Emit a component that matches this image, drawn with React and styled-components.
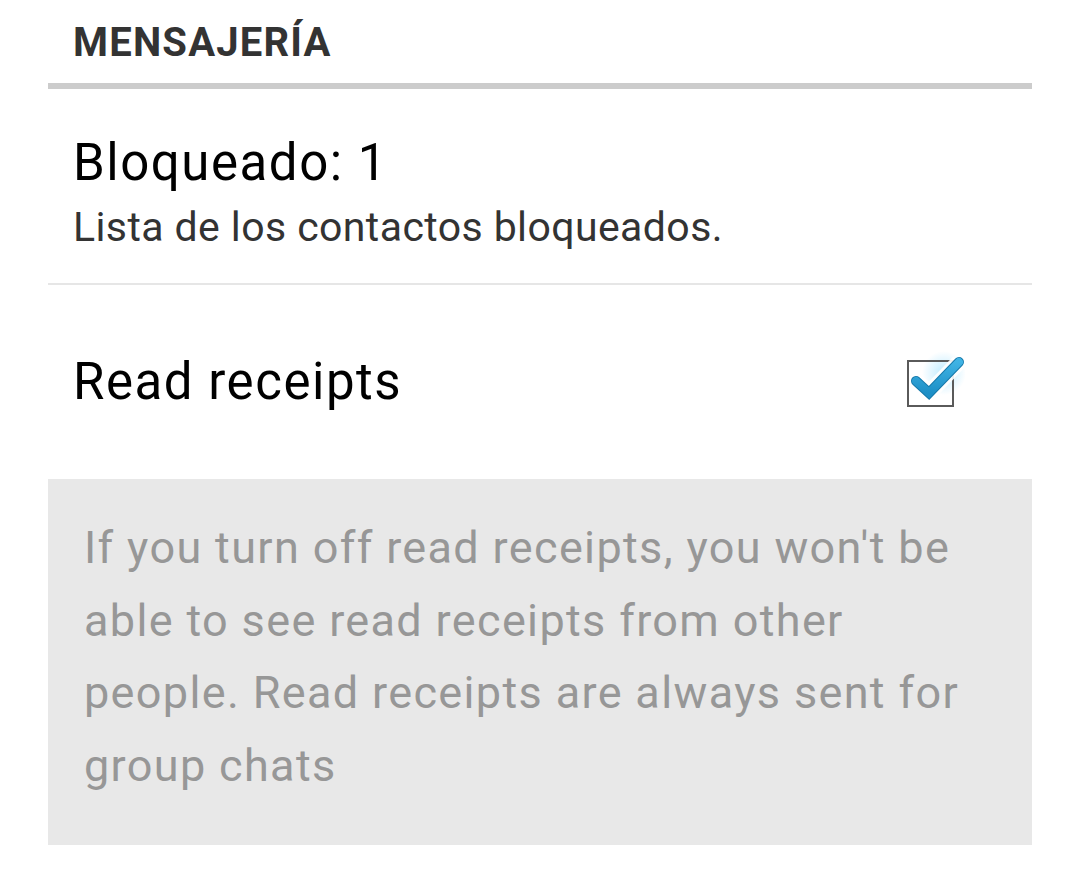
import React from 'react';
import styled, { createGlobalStyle } from 'styled-components';

const GlobalStyle = createGlobalStyle`
  html, body {
    margin: 0;
    padding: 0;
    background: #ffffff;
    font-family: Roboto, "Noto Sans", sans-serif;
  }
`;

const Page = styled.div`
  width: 1080px;
  height: 870px;
  padding: 0 48px;
  box-sizing: border-box;
  background: #fff;
`;

const SectionHeader = styled.div`
  padding: 19px 0 0 25px;
  height: 89px;
  box-sizing: border-box;
  font-size: 40px;
  font-weight: 700;
  letter-spacing: 0.03em;
  color: #333;
  line-height: 48px;
  border-bottom: 6px solid #cccccc;
`;

const Row = styled.div`
  display: flex;
  align-items: ${(p) => (p.top ? 'flex-start' : 'center')};
  justify-content: space-between;
  padding: ${(p) => (p.top ? '44px' : '0')} 67px 0 25px;
  height: ${(p) => p.height}px;
  box-sizing: border-box;
  border-bottom: ${(p) => (p.divider ? '2px solid #e6e6e6' : 'none')};
`;

const TextBlock = styled.div`
  display: flex;
  flex-direction: column;
`;

const Title = styled.div`
  font-size: 51px;
  letter-spacing: 0.03em;
  color: #000;
  line-height: 60px;
`;

const Summary = styled.div`
  font-size: 41px;
  letter-spacing: 0.01em;
  color: #333;
  line-height: 48px;
  margin-top: 10px;
`;

const CheckBox = styled.svg`
  margin-bottom: 6px;
  flex-shrink: 0;
`;

const InfoBox = styled.div`
  background: #e8e8e8;
  height: 366px;
  box-sizing: border-box;
  padding: 33px 40px 0 36px;
  font-size: 45px;
  letter-spacing: 0.03em;
  line-height: 72.5px;
  color: #979797;
`;

function CheckIcon() {
  return (
    <CheckBox width="65" height="65" viewBox="0 0 65 65">
      <defs>
        <radialGradient id="glow" cx="0.5" cy="0.5" r="0.5">
          <stop offset="0" stopColor="#a8e4ff" stopOpacity="0.75" />
          <stop offset="1" stopColor="#a8e4ff" stopOpacity="0" />
        </radialGradient>
        <linearGradient id="tick" x1="0" y1="0" x2="0" y2="1">
          <stop offset="0" stopColor="#3fb3e4" />
          <stop offset="1" stopColor="#1d8fc6" />
        </linearGradient>
      </defs>
      <circle cx="44" cy="26" r="22" fill="url(#glow)" />
      <rect x="8" y="14" width="45" height="45" fill="none" stroke="#5a5a5a" strokeWidth="2" />
      <polyline
        points="16,34 29,46 59,15"
        fill="none"
        stroke="#ffffff"
        strokeWidth="16"
        strokeLinecap="butt"
        strokeLinejoin="miter"
        opacity="0.9"
      />
      <polyline
        points="16,34 29,46 59,15"
        fill="none"
        stroke="#1579ab"
        strokeWidth="10"
        strokeLinecap="round"
        strokeLinejoin="miter"
      />
      <polyline
        points="16,34 29,46 59,15"
        fill="none"
        stroke="url(#tick)"
        strokeWidth="8"
        strokeLinecap="round"
        strokeLinejoin="miter"
      />
    </CheckBox>
  );
}

export default function App() {
  return (
    <Page>
      <GlobalStyle />
      <SectionHeader>MENSAJERÍA</SectionHeader>
      <Row height={196} divider top>
        <TextBlock>
          <Title>Bloqueado: 1</Title>
          <Summary>Lista de los contactos bloqueados.</Summary>
        </TextBlock>
      </Row>
      <Row height={194}>
        <Title>Read receipts</Title>
        <CheckIcon />
      </Row>
      <InfoBox>
        If you turn off read receipts, you won't be able to see read receipts from other
        people. Read receipts are always sent for group chats
      </InfoBox>
    </Page>
  );
}
